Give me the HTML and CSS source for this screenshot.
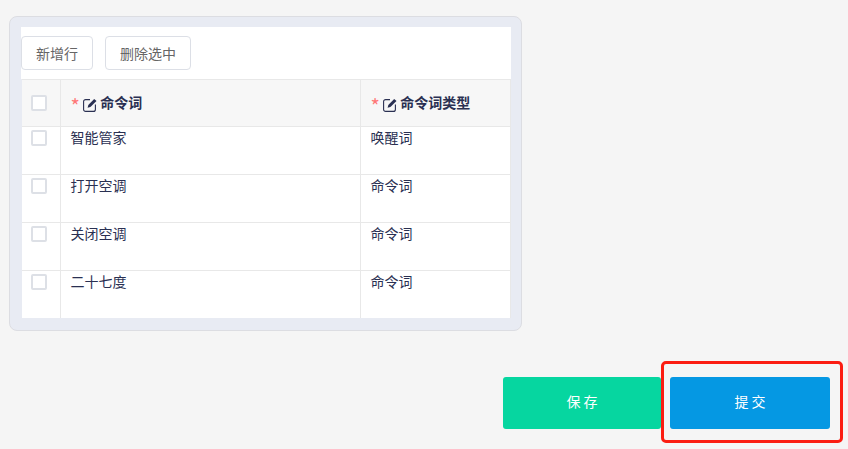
FILE: index.html
```html
<!DOCTYPE html>
<html lang="zh-CN">
  <head>
    <meta charset="UTF-8" />
    <title>命令词</title>
    <link rel="stylesheet" href="styles.css">
  </head>
  <body>
    <div class="card">
      <div class="toolbar">
        <button class="tool-btn btn-add">新增行</button>
        <button class="tool-btn btn-del">删除选中</button>
      </div>
      <table class="grid">
        <thead>
          <tr>
            <th class="col-check"><span class="check"></span></th>
            <th class="col-word">
              <span class="star">*</span>
              <svg class="edit-icon" viewBox="0 0 14 14"><path class="edit-box" d="M7 1.6H2.6A2 2 0 0 0 .6 3.6v7.8a2 2 0 0 0 2 2h7.8a2 2 0 0 0 2-2V6.4"/><path class="edit-pen" d="M4.6 9.8l.7-2.8L11.2.9 13.5 3 7.4 9.1z"/></svg>
              命令词
            </th>
            <th>
              <span class="star">*</span>
              <svg class="edit-icon" viewBox="0 0 14 14"><path class="edit-box" d="M7 1.6H2.6A2 2 0 0 0 .6 3.6v7.8a2 2 0 0 0 2 2h7.8a2 2 0 0 0 2-2V6.4"/><path class="edit-pen" d="M4.6 9.8l.7-2.8L11.2.9 13.5 3 7.4 9.1z"/></svg>
              命令词类型
            </th>
          </tr>
        </thead>
        <tbody>
          <tr>
            <td class="col-check"><span class="check"></span></td>
            <td>智能管家</td>
            <td>唤醒词</td>
          </tr>
          <tr>
            <td class="col-check"><span class="check"></span></td>
            <td>打开空调</td>
            <td>命令词</td>
          </tr>
          <tr>
            <td class="col-check"><span class="check"></span></td>
            <td>关闭空调</td>
            <td>命令词</td>
          </tr>
          <tr>
            <td class="col-check"><span class="check"></span></td>
            <td>二十七度</td>
            <td>命令词</td>
          </tr>
        </tbody>
      </table>
    </div>

    <div class="actions">
      <button class="action-btn save">保 存</button>
      <div class="highlight">
        <button class="action-btn submit">提 交</button>
      </div>
    </div>
  </body>
</html>
```

FILE: styles.css
```css
* {
  box-sizing: border-box;
}

body {
  margin: 0;
  padding: 16px 5px 0 9px;
  background: #f5f5f5;
  color: #2a3052;
  font-family: "Noto Sans CJK SC", "Noto Sans", sans-serif;
  font-size: 14px;
}

/* ========== Card ========== */
.card {
  width: 513px;
  height: 315px;
  padding: 10px 10px 12px 11px;
  background: #e8ebf3;
  border: 1px solid #dcdde2;
  border-radius: 8px;
}

.toolbar {
  display: flex;
  gap: 12px;
  height: 52px;
  padding-top: 9px;
  background: #fff;
}

.tool-btn {
  height: 34px;
  padding: 0;
  background: #fff;
  border: 1px solid #dcdfe6;
  border-radius: 4px;
  color: #666;
  font: inherit;
}

.btn-add {
  width: 72px;
}

.btn-del {
  width: 86px;
}

/* ========== Table ========== */
.grid {
  width: 489px;
  margin-left: 1px;
  border-collapse: collapse;
  table-layout: fixed;
  background: #fff;
}

.grid th,
.grid td {
  padding: 0 10px;
  border-left: 1px solid #e8e8e8;
  border-right: 1px solid #e8e8e8;
  text-align: left;
  vertical-align: top;
}

.grid th:first-child,
.grid td:first-child {
  border-left: 0;
}

.grid th {
  height: 47px;
  padding-top: 12px;
  background: #f7f7f7;
  border-top: 1px solid #e8e8e8;
  border-bottom: 1px solid #e8e8e8;
  font-weight: 700;
  line-height: 20px;
}

.grid td {
  height: 48px;
  padding-top: 0;
  border-top: 1px solid #e8e8e8;
  line-height: 20px;
}

.grid tbody tr:first-child td {
  border-top: 0;
}

.grid tbody tr:last-child td {
  height: 47px;
}

.grid .col-check {
  width: 38px;
  padding: 0 0 0 9px;
}

.grid th.col-check {
  padding-top: 15px;
}

.grid td.col-check {
  padding-top: 3px;
}

.grid .col-word {
  width: 300px;
}

.check {
  display: block;
  width: 16px;
  height: 16px;
  background: #fff;
  border: 2px solid #dde0e6;
  border-radius: 2px;
}

.star {
  color: #f77;
  font-size: 20px;
  font-weight: 400;
  line-height: 0;
  vertical-align: -6px;
}

.edit-icon {
  width: 14px;
  height: 14px;
  vertical-align: -4px;
}

.edit-box {
  fill: none;
  stroke: #2a3052;
  stroke-width: 1.1;
}

.edit-pen {
  fill: #2a3052;
}

/* ========== Buttons ========== */
.actions {
  display: flex;
  justify-content: flex-end;
  align-items: flex-start;
  margin-top: 30px;
}

.action-btn {
  width: 160px;
  height: 52px;
  padding: 0 0 5px;
  border: 0;
  border-radius: 3px;
  color: #fff;
  font: inherit;
}

.save {
  width: 158px;
  margin-top: 16px;
  background: #06d6a0;
}

.submit {
  display: block;
  background: #0598e3;
}

.highlight {
  width: 182px;
  height: 82px;
  padding: 13px 10px 13px 6px;
  background: #f5f5f5;
  border: 3px solid #fb1d12;
  border-radius: 5px;
}
```
